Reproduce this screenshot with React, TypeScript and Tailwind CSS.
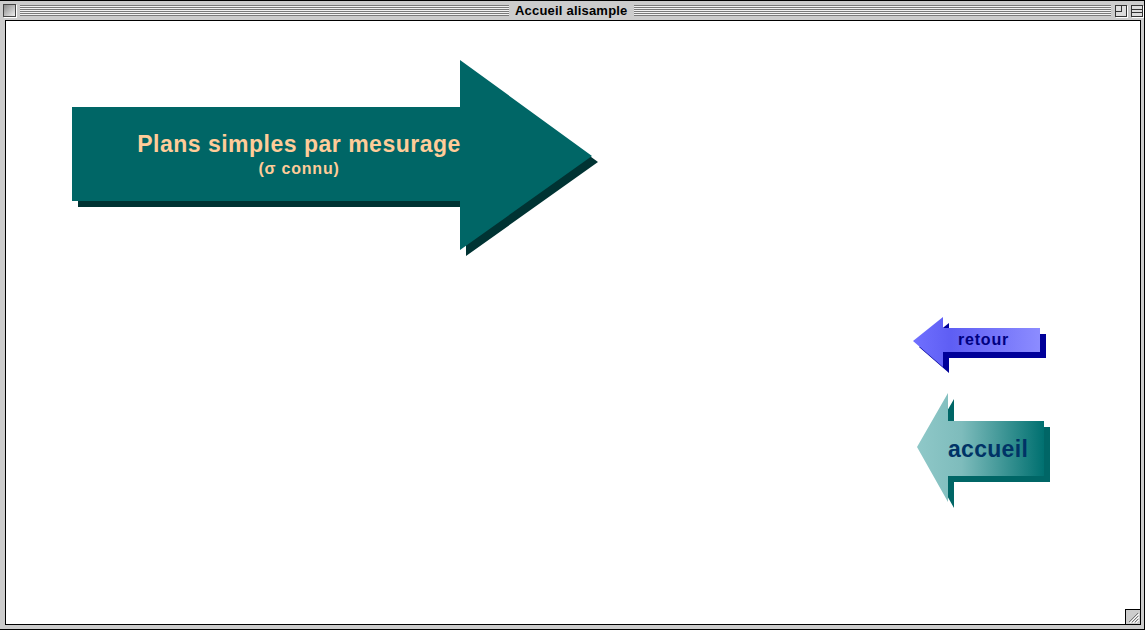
import React from 'react'

const stripeBg =
  'h-[11px] bg-[repeating-linear-gradient(to_bottom,#7a7a7a_0px,#7a7a7a_1px,#f2f2f2_1px,#f2f2f2_2px)]'

const BigArrow = () => (
  <svg className='absolute left-[66px] top-[39px]' width='530' height='200' viewBox='0 0 530 200'>
    <polygon points='6,53 394,53 394,6 526,102 394,196 394,147 6,147' fill='#003333' />
    <polygon points='0,47 388,47 388,0 520,96 388,190 388,141 0,141' fill='#006666' />
  </svg>
)

const RetourArrow = () => (
  <svg className='absolute left-[906px] top-[295px]' width='140' height='64' viewBox='0 0 140 64'>
    <defs>
      <linearGradient id='retourGrad' x1='0' y1='0' x2='1' y2='0'>
        <stop offset='0' stopColor='#7070ff' />
        <stop offset='0.3' stopColor='#5e5ef4' />
        <stop offset='1' stopColor='#8c8cff' />
      </linearGradient>
    </defs>
    <polygon points='7,31 37,7 37,18 134,18 134,42 37,42 37,57' fill='#000099' />
    <polygon points='1,25 31,1 31,12 128,12 128,36 31,36 31,51' fill='url(#retourGrad)' />
  </svg>
)

const AccueilArrow = () => (
  <svg className='absolute left-[910px] top-[371px]' width='140' height='120' viewBox='0 0 140 120'>
    <defs>
      <linearGradient id='accueilGrad' x1='0' y1='0' x2='1' y2='0'>
        <stop offset='0' stopColor='#8fc8c8' />
        <stop offset='0.35' stopColor='#7ebcbc' />
        <stop offset='1' stopColor='#007070' />
      </linearGradient>
    </defs>
    <polygon points='7,61 38,7 38,35 134,35 134,90 38,90 38,116' fill='#006666' />
    <polygon points='1,55 32,1 32,29 128,29 128,84 32,84 32,110' fill='url(#accueilGrad)' />
  </svg>
)

export default function App() {
  return (
    <div className="w-[1147px] h-[631px] bg-white font-['Liberation_Sans',Arial,sans-serif]">
      <div className='w-[1145px] h-[630px] bg-[#cccccc] border-t border-r border-b border-black flex flex-col'>
        {/* title bar */}
        <div className='h-[19px] flex items-center pl-[3px] pr-[1px] gap-[4px]'>
          <div className='w-[13px] h-[13px] border border-[#444] bg-gradient-to-br from-[#8a8a8a] to-[#f0f0f0] shadow-[1px_1px_0_#ffffff]' />
          <div className={`w-[489px] ${stripeBg}`} />
          <span className='px-[2px] whitespace-nowrap text-[13px] leading-[15px] font-bold tracking-[0.2px] text-black'>Accueil alisample</span>
          <div className={`flex-1 ${stripeBg}`} />
          <div className='w-[12px] h-[12px] border border-[#333] bg-[#dddddd] shadow-[1px_1px_0_#ffffff]'>
            <div className='w-[6px] h-[6px] border-r border-b border-[#333]' />
          </div>
          <div className='w-[12px] h-[12px] border border-[#333] bg-[#dddddd] shadow-[1px_1px_0_#ffffff] flex flex-col justify-center gap-[2px]'>
            <div className='h-px bg-[#333]' />
            <div className='h-px bg-[#333]' />
          </div>
        </div>

        {/* content */}
        <div className='flex-1 ml-[5px] mr-[3px] mb-[4px] border border-black bg-white relative overflow-hidden'>
          <BigArrow />
          <div className='absolute left-[132px] top-[110px] w-[322px] flex flex-col items-center whitespace-nowrap text-[#ffcc99] font-bold'>
            <span className='text-[23px] leading-[26px] tracking-[0.5px]'>Plans simples par mesurage</span>
            <span className='mt-[3px] text-[16px] leading-[18px] tracking-[0.8px]'>(σ connu)</span>
          </div>

          <RetourArrow />
          <span className='absolute left-[952px] top-[310px] whitespace-nowrap text-[16px] leading-[18px] font-bold tracking-[0.8px] text-[#000080]'>retour</span>

          <AccueilArrow />
          <span className='absolute left-[942px] top-[415px] whitespace-nowrap text-[23px] leading-[26px] font-bold tracking-[0.3px] text-[#003366]'>accueil</span>

          {/* grow box */}
          <div className='absolute right-[-1px] bottom-[-1px] w-[16px] h-[16px] bg-[#cccccc] border-l border-t border-black'>
            <svg width='15' height='15' viewBox='0 0 15 15'>
              <path d='M3 12 L12 3 M6 12 L12 6 M9 12 L12 9' stroke='#777' strokeWidth='1' />
              <path d='M4 13 L13 4 M7 13 L13 7 M10 13 L13 10' stroke='#fff' strokeWidth='1' />
            </svg>
          </div>
        </div>
      </div>
    </div>
  )
}
